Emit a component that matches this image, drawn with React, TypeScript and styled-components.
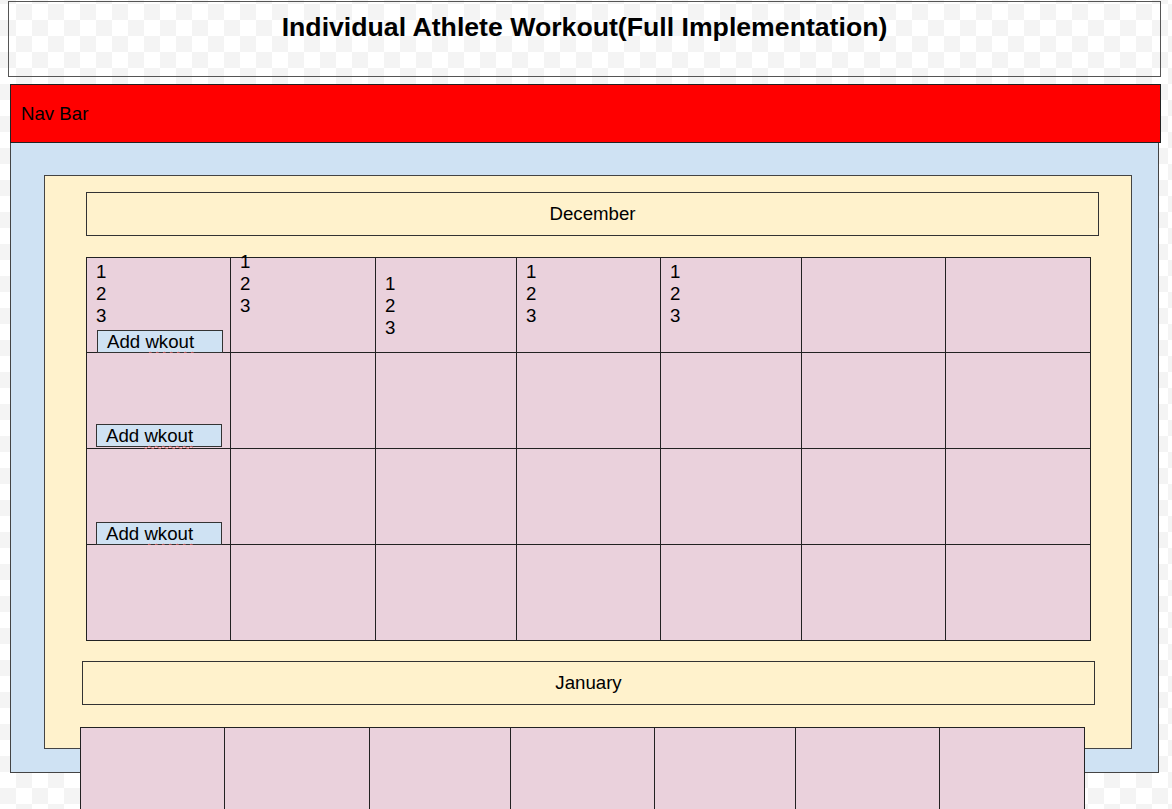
import styled, { createGlobalStyle } from "styled-components";

const GlobalStyle = createGlobalStyle`
  html, body {
    margin: 0;
    padding: 0;
  }
  body {
    font-family: "Liberation Sans", Arial, sans-serif;
    color: #000;
    background-color: #fff;
    background-image: repeating-conic-gradient(#f4f4f4 0 25%, #ffffff 0 50%);
    background-size: 32px 32px;
    background-position: 0 4px;
  }
`;

const Page = styled.div`
  padding: 1px 0 0 8px;
  width: 1172px;
  min-height: 809px;
  box-sizing: border-box;
`;

const TitleBox = styled.div`
  width: 1153px;
  height: 76px;
  box-sizing: border-box;
  border: 1px solid #555;
  padding-top: 10px;
  text-align: center;
  font-weight: 700;
  font-size: 26.67px;
  line-height: 31px;
`;

const NavBar = styled.div`
  margin: 7px 0 0 2px;
  width: 1151px;
  height: 59px;
  box-sizing: border-box;
  border: 1px solid #222;
  background: #ff0000;
  display: flex;
  align-items: center;
  padding-left: 10px;
  font-size: 18.67px;
`;

const BluePanel = styled.div`
  margin-left: 2px;
  width: 1149px;
  height: 630px;
  box-sizing: border-box;
  border: 1px solid #444;
  border-top: none;
  background: #cfe2f3;
  padding: 32px 0 0 33px;
`;

const YellowPanel = styled.div`
  width: 1088px;
  height: 574px;
  box-sizing: border-box;
  border: 1px solid #444;
  background: #fff2cc;
  padding-top: 16px;
`;

const MonthHeader = styled.div<{ $left: number; $top: number }>`
  margin: ${(p) => p.$top}px 0 0 ${(p) => p.$left}px;
  width: 1013px;
  height: 44px;
  box-sizing: border-box;
  border: 1px solid #333;
  display: flex;
  align-items: center;
  justify-content: center;
  font-size: 18.67px;
`;

const Calendar = styled.div<{ $left: number; $top: number; $rows: string }>`
  margin: ${(p) => p.$top}px 0 0 ${(p) => p.$left}px;
  width: 1005px;
  display: grid;
  grid-template-columns: 144px 145px 141px 144px 141px 144px 145px;
  grid-template-rows: ${(p) => p.$rows};
  border-top: 1px solid #222;
  border-left: 1px solid #222;
  box-sizing: border-box;
  position: relative;
`;

const Cell = styled.div`
  background: #ead1dc;
  border-right: 1px solid #222;
  border-bottom: 1px solid #222;
  display: flex;
  flex-direction: column;
  align-items: flex-start;
  min-width: 0;
`;

const Numbers = styled.div<{ $offset: number }>`
  margin-top: ${(p) => p.$offset}px;
  padding-left: 9px;
  font-size: 18.67px;
  line-height: 22px;
`;

const AddButton = styled.div<{ $left: number; $bottom: number }>`
  margin: auto 0 ${(p) => p.$bottom}px ${(p) => p.$left}px;
  width: 126px;
  height: 23px;
  box-sizing: border-box;
  border: 1px solid #333;
  background: #cfe2f3;
  padding-left: 9px;
  font-size: 18.67px;
  line-height: 21px;
  white-space: nowrap;
`;

const Misspelt = styled.span`
  text-decoration: underline wavy #e06666;
  text-decoration-thickness: 1px;
  text-underline-offset: 3px;
`;

const numberOffsets: (number | null)[] = [3, -7, 15, 3, 3, null, null];

const Wkout = ({ left, bottom }: { left: number; bottom: number }) => (
  <AddButton $left={left} $bottom={bottom}>
    Add <Misspelt>wkout</Misspelt>
  </AddButton>
);

const App = () => {
  const december = Array.from({ length: 28 }, (_, i) => i);
  const january = Array.from({ length: 7 }, (_, i) => i);

  return (
    <>
      <GlobalStyle />
      <Page>
        <TitleBox>Individual Athlete Workout(Full Implementation)</TitleBox>
        <NavBar>Nav Bar</NavBar>
        <BluePanel>
          <YellowPanel>
            <MonthHeader $left={41} $top={0}>
              December
            </MonthHeader>
            <Calendar $left={41} $top={21} $rows="95px 96px 96px 96px">
              {december.map((i) => {
                const row = Math.floor(i / 7);
                const col = i % 7;
                const offset = row === 0 ? numberOffsets[col] : null;
                return (
                  <Cell key={i}>
                    {offset !== null && (
                      <Numbers $offset={offset}>
                        1<br />2<br />3
                      </Numbers>
                    )}
                    {col === 0 && row < 3 && (
                      <Wkout left={row === 0 ? 10 : 9} bottom={row === 1 ? 1 : -1} />
                    )}
                  </Cell>
                );
              })}
            </Calendar>
            <MonthHeader $left={37} $top={20}>
              January
            </MonthHeader>
            <Calendar $left={35} $top={22} $rows="96px">
              {january.map((i) => (
                <Cell key={i} />
              ))}
            </Calendar>
          </YellowPanel>
        </BluePanel>
      </Page>
    </>
  );
};

export default App;
